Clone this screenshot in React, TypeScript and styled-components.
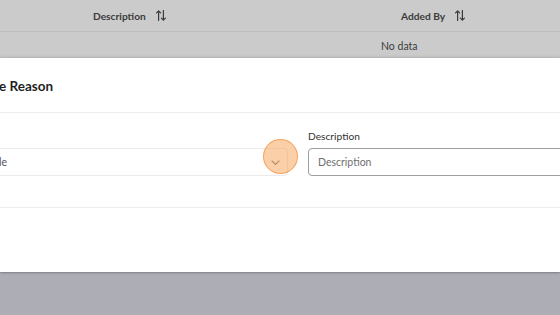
import React from 'react';
import styled, { createGlobalStyle } from 'styled-components';

const Global = createGlobalStyle`
  html, body {
    margin: 0;
    padding: 0;
    width: 560px;
    height: 315px;
    overflow: hidden;
    background: #adadb5;
    font-family: Lato, "Noto Sans", sans-serif;
  }
`;

const Page = styled.div`
  width: 560px;
  height: 315px;
  display: flex;
  flex-direction: column;
  overflow: hidden;
  background: #adadb5;
`;

const Table = styled.div`
  background: #cbcbcb;
  display: flex;
  flex-direction: column;
`;

const HeaderRow = styled.div`
  height: 31px;
  display: grid;
  grid-template-columns: 308px 1fr;
  padding-left: 93px;
  align-items: center;
  border-bottom: 1px solid #bcbcbc;
`;

const HeadCell = styled.div`
  display: flex;
  align-items: center;
  gap: 10px;
  font-size: 10.2px;
  font-weight: 700;
  color: #3b3b3b;
`;

const EmptyRow = styled.div`
  height: 26px;
  display: flex;
  align-items: center;
  padding-left: 381px;
  padding-top: 2px;
  box-sizing: border-box;
  font-size: 10.5px;
  color: #3b3b3b;
`;

const Modal = styled.div`
  position: relative;
  background: #fff;
  display: flex;
  flex-direction: column;
  box-shadow: 0 -1px 3px rgba(0, 0, 0, 0.12), 0 1px 2px rgba(0, 0, 0, 0.25);
`;

const ModalHeader = styled.div`
  height: 54px;
  display: flex;
  align-items: center;
  border-bottom: 1px solid #ececec;
  font-size: 13.5px;
  font-weight: 700;
  color: #1f1f1f;
`;

const Title = styled.span`
  margin-left: -1px;
  margin-top: 1px;
`;

const Body = styled.div`
  display: grid;
  grid-template-columns: 288px 1fr;
  column-gap: 20px;
  padding-top: 16px;
  padding-bottom: 31px;
  border-bottom: 1px solid #ececec;
`;

const Field = styled.div`
  display: flex;
  flex-direction: column;
  gap: 5px;
  min-width: 0;
`;

const Label = styled.label`
  height: 14px;
  line-height: 14px;
  font-size: 10.2px;
  color: #333;
`;

const SelectBox = styled.div`
  position: relative;
  height: 28px;
  box-sizing: border-box;
  border: 1px solid #ebebeb;
  border-left: none;
  border-radius: 0 4px 4px 0;
  display: flex;
  align-items: center;
  justify-content: space-between;
  font-size: 10.5px;
  color: #555;
`;

const SelectValue = styled.span`
  margin-left: -1px;
`;

const Chevron = styled.svg`
  width: 9px;
  height: 6px;
  margin-right: 7px;
  margin-top: 1px;
`;

const Ripple = styled.div`
  position: absolute;
  left: 263px;
  top: -10px;
  width: 35px;
  height: 35px;
  box-sizing: border-box;
  border-radius: 50%;
  background: rgba(248, 160, 80, 0.5);
  border: 1.5px solid rgba(246, 160, 90, 0.95);
`;

const Input = styled.input`
  height: 28px;
  box-sizing: border-box;
  width: 300px;
  border: 1px solid #9e9e9e;
  border-radius: 4px;
  padding: 0 9px;
  font-family: inherit;
  font-size: 10.5px;
  color: #333;
  outline: none;
  &::placeholder {
    color: #6f6f6f;
  }
`;

const Footer = styled.div`
  height: 64px;
`;

const SortIcon = () => (
  <svg width="10" height="11" viewBox="0 0 10 11" fill="none" stroke="#3b3b3b" strokeWidth="1.2" strokeLinecap="round" strokeLinejoin="round">
    <path d="M2.6 10.5V0.8M0.6 2.8L2.6 0.8L4.6 2.8" />
    <path d="M7.4 0.5V10.2M5.4 8.2L7.4 10.2L9.4 8.2" />
  </svg>
);

export default function App() {
  return (
    <Page>
      <Global />
      <Table>
        <HeaderRow>
          <HeadCell>
            Description <SortIcon />
          </HeadCell>
          <HeadCell>
            Added By <SortIcon />
          </HeadCell>
        </HeaderRow>
        <EmptyRow>No data</EmptyRow>
      </Table>
      <Modal>
        <ModalHeader>
          <Title>e Reason</Title>
        </ModalHeader>
        <Body>
          <Field>
            <Label />
            <SelectBox>
              <SelectValue>le</SelectValue>
              <Chevron viewBox="0 0 9 6" fill="none" stroke="#7a7a7a" strokeWidth="1.1" strokeLinecap="round">
                <path d="M1 1L4.5 4.5L8 1" />
              </Chevron>
              <Ripple />
            </SelectBox>
          </Field>
          <Field>
            <Label>Description</Label>
            <Input placeholder="Description" />
          </Field>
        </Body>
        <Footer />
      </Modal>
    </Page>
  );
}
